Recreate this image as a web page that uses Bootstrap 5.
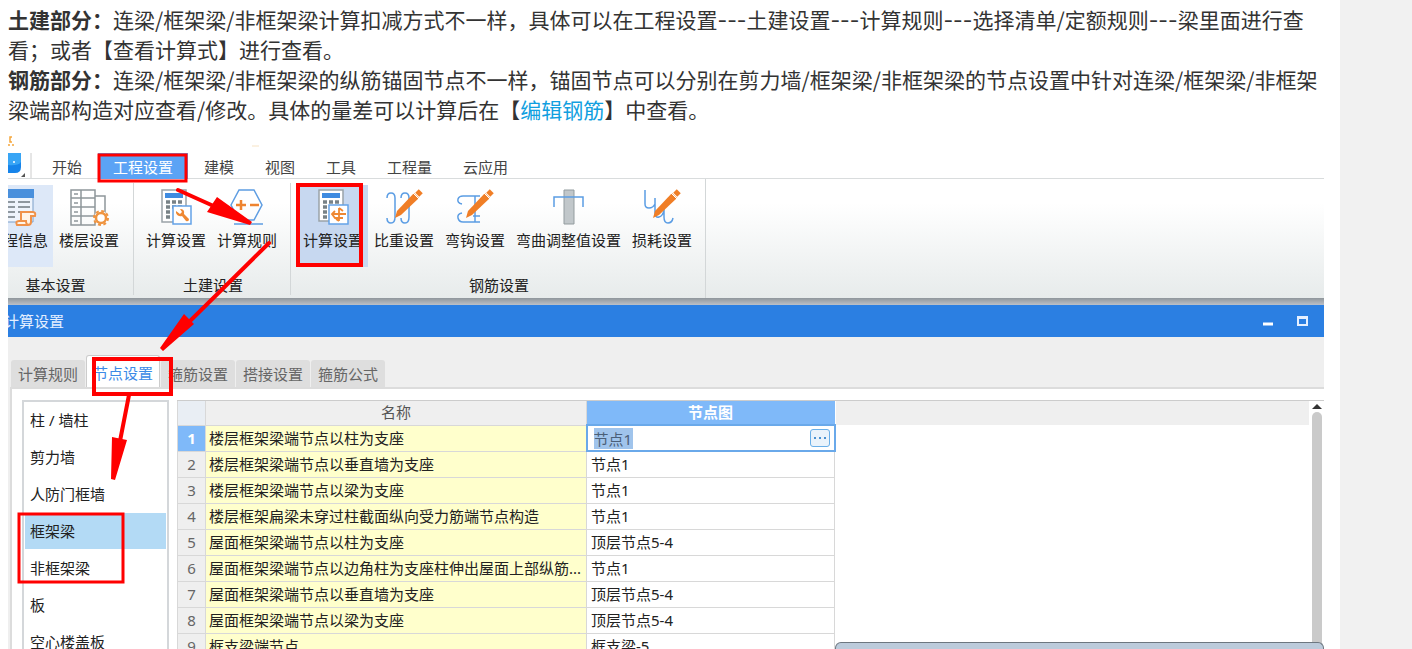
<!DOCTYPE html>
<html lang="zh-CN">
<head>
<meta charset="utf-8">
<meta name="viewport" content="width=device-width, initial-scale=1">
<title>计算设置说明</title>
<link href="https://cdn.jsdelivr.net/npm/bootstrap@5.3.0/dist/css/bootstrap.min.css" rel="stylesheet">
<style>
  body { background: #f1f1f1; font-family: "Noto Sans CJK SC", sans-serif; color: #333; }
  .page-main { background: #fff; margin-right: 72px; padding: 4px 16px 0 8px; }
  .answer { font-size: 21px; line-height: 30px; margin-bottom: 7px; }
  .answer a { color: #109fe0; text-decoration: none; }
  .dashes { font-family: Inter, sans-serif; line-height: 1; }
  .shot { font: 15px/20px "Noto Sans", "Noto Sans CJK SC", sans-serif; color: #333; min-height: 0; }
  .shot button { font: inherit; color: inherit; border: 0; background: none; padding: 0; white-space: nowrap; }
  .remnant { height: 22px; }
  .menu-row { height: 26px; gap: 1px; border-bottom: 1px solid #d9dcdd; color: #444; }
  .app-mark { width: 28px; height: 25px; }
  .shot .menu-tab { padding: 2px 15px 4px; height: 29px; }
  .shot .menu-tab.chosen { background: #5ba3f5; color: #fff; }
  .ribbon { height: 119px; background: linear-gradient(#fff 20%, #e7ebeb); color: #222; }
  .tool-group { padding: 6px 5px 3px; }
  .tool-group + .tool-group::before { content: ""; position: absolute; left: 0; top: 4px; bottom: 3px; width: 1px; background: #d3d7d8; }
  .first-group { margin-left: -25px; width: 150px; padding-left: 0; }
  .second-group { width: 157px; padding-left: 8px; }
  .third-group { width: 416px; padding-left: 8px; border-right: 1px solid #d3d7d8; }
  .tools { gap: 1px; }
  .shot .tool { height: 82px; padding: 4px 5px 0; display: flex; flex-direction: column; align-items: center; }
  .tool svg { width: 40px; height: 37px; margin-bottom: 4px; }
  .hovered { background: #dde8f8 !important; }
  .pressed { background: #c7d8f0 !important; }
  .band { height: 7px; background: linear-gradient(#8f969b, #bcc0c8); }
  .title-row { height: 32px; background: #2b7fe2; color: #e4efff; padding-right: 16px; gap: 22px; }
  .title-text { margin-left: -4px; }
  .dialog { background: #efefef; min-height: 0; }
  .dialog-tabs { padding: 18px 0 0 3px; gap: 1px; color: #666; height: 50px; }
  .shot .dialog-tab { padding: 0 7px; width: 74px; height: 27px; background: #dedede; border-radius: 3px 3px 0 0; }
  .shot .dialog-tab.chosen { background: #fff; color: #3c8ae6; height: 32px; border: 1px solid #ccc; border-bottom: 0; padding: 3px 6px 0; }
  .pane { background: #fff; border-top: 2px solid #dcdcdc; border-left: 2px solid #dcdcdc; margin-left: 2px; padding: 11px 0 0 10px; min-height: 0; }
  .kinds { width: 147px; border: 2px solid #d4d7da; border-bottom: 0; padding: 0 1px; flex: none; margin-right: 8px; color: #222; }
  .shot .kind { height: 37px; padding: 0 5px 2px; text-align: left; display: block; width: 100%; }
  .shot .kind.chosen { background: linear-gradient(#b3daf5, #b3daf5) top / 100% 36px no-repeat; }
  .sheet { border-top: 1px solid #ccc; min-width: 0; }
  .grid { table-layout: fixed; width: 657px; border-collapse: collapse; flex: none; color: #222; }
  .grid th, .grid td { height: 26px; padding: 0 4px 1px; border: 1px solid #d8d8d8; overflow: hidden; text-overflow: ellipsis; white-space: nowrap; font-weight: 400; }
  .grid thead th { background: #efefef; text-align: center; height: 24px; color: #555; border-top: 0; }
  .grid thead th:first-child { background: #e9eef4; }
  .grid thead th:last-child { background: #7fb9f9; color: #fff; font-weight: 700; border-color: #7fb9f9; }
  .grid tbody th { background: #efefef; text-align: center; color: #666; }
  .grid tbody td:nth-child(2) { background: #ffc; padding-left: 3px; }
  .grid tbody tr:first-child th { background: #7fb9f9; color: #fff; font-weight: 700; }
  .grid td.editing { border: 2px solid #6aa9ea; background: #fff; padding-bottom: 0; }
  .cell-input { width: 39px; height: 21px; border: 0; padding: 0; background: #a0c4ec; color: #4b5f78; font: inherit; margin-left: 2px; }
  .shot .more { width: 20px; height: 18px; border: 1px solid #6aafe8; border-radius: 3px; background: #eaf3fb; display: flex; align-items: center; justify-content: center; }
  .head-fill { height: 24px; background: #efefef; }
  .scroller { width: 15px; padding: 2px 2px 0 3px; }
  .thumb { background: #cacaca; border-radius: 5px 5px 0 0; margin-top: 3px; }
  .marks { left: 0; top: 0; width: 400px; height: 470px; pointer-events: none; z-index: 3; }
  .next-window { left: 827px; right: 0; bottom: 0; height: 7px; background: #bccbdb; border: 1px solid #6d7780; border-bottom: 0; border-radius: 6px 6px 0 0; z-index: 2; }
</style>
</head>
<body>
<main class="page-main vh-100 d-flex flex-column overflow-hidden">
  <p class="answer"><strong>土建部分：</strong>连梁/框架梁/非框架梁计算扣减方式不一样，具体可以在工程设置<span class="dashes">---</span>土建设置<span class="dashes">---</span>计算规则<span class="dashes">---</span>选择清单/定额规则<span class="dashes">---</span>梁里面进行查<br>看；或者【查看计算式】进行查看。<br><strong>钢筋部分：</strong>连梁/框架梁/非框架梁的纵筋锚固节点不一样，锚固节点可以分别在剪力墙/框架梁/非框架梁的节点设置中针对连梁/框架梁/非框架梁端部构造对应查看/修改。具体的量差可以计算后在【<a href="#">编辑钢筋</a>】中查看。</p>

  <section class="shot position-relative flex-grow-1 d-flex flex-column overflow-hidden">
    <div class="remnant flex-shrink-0">
      <svg class="d-block" width="300" height="22"><path d="M4 6H2v5h2M0 14h2M4 14h2" fill="none" stroke="#f5a63c" stroke-width="1.5"/><path d="M244 15h7" stroke="#f7e3c4"/></svg>
    </div>
    <nav class="menu-row d-flex flex-shrink-0">
      <svg class="app-mark flex-shrink-0" viewBox="0 0 28 25"><path d="M0 0h13v14q0 6-6 6H0z" fill="#1684ea"/><path d="M0 0h13v9q-3 4-13 3z" fill="#38a5f5"/><circle cx="6" cy="9" r="1" fill="#fff"/><path d="M17 20v4h-4z" fill="#555"/><path d="M23 0v25" stroke="#ccc"/></svg>
      <button class="menu-tab">开始</button>
      <button class="menu-tab chosen">工程设置</button>
      <button class="menu-tab">建模</button>
      <button class="menu-tab">视图</button>
      <button class="menu-tab">工具</button>
      <button class="menu-tab">工程量</button>
      <button class="menu-tab">云应用</button>
    </nav>

    <div class="ribbon d-flex flex-shrink-0">
      <div class="tool-group first-group position-relative d-flex flex-column justify-content-between flex-shrink-0">
        <div class="tools d-flex">
          <button class="tool hovered"><svg viewBox="0 0 40 37"><path d="M4 1h31v32H4z" fill="#eef4fc" stroke="#7d9fc8"/><path d="M4 0h32v9H4z" fill="#4a90dc"/><path d="M8 13h9M20 13h12M8 18h9M20 18h12M8 23h9M20 23h6M8 28h9" stroke="#8f989f" stroke-width="2"/><path d="M23 33V23h12q3 0 2 4h-4v6q0 3-3 3H19q-2-4 2-4h7q0 4 3 4" fill="#fff4e8" stroke="#f0924a" stroke-width="2"/></svg>工程信息</button>
          <button class="tool"><svg viewBox="0 0 40 37"><path d="M2 1h24v35H2zM12 1v35M2 9h24M2 18h24M2 27h24M26 7h10v18M5 5h4M5 14h4M5 23h4M5 32h4" fill="none" stroke="#8e979b" stroke-width="1.5"/><circle cx="32" cy="29" r="7" fill="#fff" stroke="#ef9440" stroke-width="2" stroke-dasharray="3 2.5"/><circle cx="32" cy="29" r="5" fill="#fff" stroke="#ef9440" stroke-width="2.5"/></svg>楼层设置</button>
        </div>
        <div class="text-center">基本设置</div>
      </div>
      <div class="tool-group second-group position-relative d-flex flex-column justify-content-between flex-shrink-0">
        <div class="tools d-flex">
          <button class="tool"><svg viewBox="0 0 40 37"><path d="M6 1h24v32H6z" fill="#fff" stroke="#9aa3a8" stroke-width="1.5"/><path d="M9 4h18v5H9z" fill="#3f8be0"/><path d="M10 13h18M10 18h18M10 23h6M10 28h6" stroke="#788287" stroke-width="3.5" stroke-dasharray="4 2"/><path d="M17 17h18v18H17z" fill="#fff" stroke="#64a3e8" stroke-width="1.5"/><path d="M20 22v2q2 4 6 3l4 5q3 1 3-2l-5-5q1-5-4-5l2 3-2 2z" fill="#ef8832"/></svg>计算设置</button>
          <button class="tool"><svg viewBox="0 0 40 37"><path d="M4 16L12 1h15l8 15-8 15H12zM7 35h29" fill="none" stroke="#5e9de2" stroke-width="1.5"/><path d="M9 16h10M14 11v10M23 16h9" stroke="#ee8430" stroke-width="2.5"/></svg>计算规则</button>
        </div>
        <div class="text-center">土建设置</div>
      </div>
      <div class="tool-group third-group position-relative d-flex flex-column justify-content-between flex-shrink-0">
        <div class="tools d-flex">
          <button class="tool pressed"><svg viewBox="0 0 40 37"><path d="M6 1h24v31H6z" fill="#fff" stroke="#9aa3a8" stroke-width="1.5"/><path d="M9 4h18v5H9z" fill="#3f8be0"/><path d="M10 13h18M10 18h6M10 23h6M10 28h6" stroke="#788287" stroke-width="3.5" stroke-dasharray="4 2"/><path d="M16 16h19v19H16z" fill="#fff" stroke="#64a3e8" stroke-width="1.5"/><path d="M26 19v13M19 25h14M22 22l-3 3 3 4h8M26 19l4 3M26 32l-3-2" fill="none" stroke="#ef8832" stroke-width="1.8"/></svg>计算设置</button>
          <button class="tool"><svg viewBox="0 0 40 37"><path d="M3 9q0-5 4-5t4 5v19q0 6-4 6t-4-5M17 9q0-5 4-5t4 5v19q0 6-4 6t-4-5" fill="none" stroke="#5b9de4" stroke-width="1.5"/><path d="M30 4l5 5-18 17-6 3 2-7z" fill="#f07e26"/><path d="M33 2l4 4" stroke="#f07e26" stroke-width="5"/><path d="M29 4l6 6" stroke="#fff"/></svg>比重设置</button>
          <button class="tool"><svg viewBox="0 0 40 37"><path d="M7 15q-5-1-4-5 1-3 5-3h17M7 24q-5 1-4 5 1 4 5 4h17M20 7v26M18 27h7" fill="none" stroke="#5b9de4" stroke-width="1.5"/><path d="M30 4l5 5-18 17-6 3 2-7z" fill="#f07e26"/><path d="M33 2l4 4" stroke="#f07e26" stroke-width="5"/><path d="M29 4l6 6" stroke="#fff"/></svg>弯钩设置</button>
          <button class="tool"><svg viewBox="0 0 40 37"><path d="M15 1h10v34H15z" fill="#c1c7ca" stroke="#939c9f"/><path d="M5 18V8h29v10" fill="none" stroke="#5b9de4" stroke-width="1.5"/></svg>弯曲调整值设置</button>
          <button class="tool"><svg viewBox="0 0 40 37"><path d="M3 1v14q0 4 4 4t6-4V9M13 15v8q0 6 4 5t5-7M22 18v10q0 6 4 6t5-5" fill="none" stroke="#5b9de4" stroke-width="1.5"/><path d="M30 4l5 5-18 17-6 3 2-7z" fill="#f07e26"/><path d="M33 2l4 4" stroke="#f07e26" stroke-width="5"/><path d="M29 4l6 6" stroke="#fff"/></svg>损耗设置</button>
        </div>
        <div class="text-center">钢筋设置</div>
      </div>
    </div>

    <div class="band flex-shrink-0"></div>
    <div class="title-row d-flex align-items-center flex-shrink-0">
      <span class="title-text me-auto">计算设置</span>
      <button aria-label="最小化"><svg class="d-block" width="12" height="12"><path d="M1 9h10" stroke="#fff" stroke-width="3"/></svg></button>
      <button aria-label="最大化"><svg class="d-block" width="12" height="12"><path d="M2 2h9v8H2zM1 3h11" fill="none" stroke="#e4efff" stroke-width="2"/></svg></button>
    </div>

    <div class="dialog flex-grow-1 d-flex flex-column">
      <div class="dialog-tabs d-flex align-items-end flex-shrink-0">
        <button class="dialog-tab">计算规则</button>
        <button class="dialog-tab chosen">节点设置</button>
        <button class="dialog-tab">箍筋设置</button>
        <button class="dialog-tab">搭接设置</button>
        <button class="dialog-tab">箍筋公式</button>
      </div>
      <div class="pane flex-grow-1 d-flex overflow-hidden">
        <div class="kinds">
          <button class="kind">柱 / 墙柱</button>
          <button class="kind">剪力墙</button>
          <button class="kind">人防门框墙</button>
          <button class="kind chosen">框架梁</button>
          <button class="kind">非框架梁</button>
          <button class="kind">板</button>
          <button class="kind">空心楼盖板</button>
        </div>
        <div class="sheet flex-grow-1 d-flex">
          <div>
            <table class="grid">
              <colgroup><col style="width:28px"><col style="width:381px"><col style="width:248px"></colgroup>
              <thead><tr><th></th><th>名称</th><th>节点图</th></tr></thead>
              <tbody>
                <tr><th>1</th><td>楼层框架梁端节点以柱为支座</td><td class="editing"><div class="d-flex justify-content-between align-items-center"><input class="cell-input" aria-label="节点图" value="节点1"><button class="more" aria-label="更多"><svg width="14" height="4"><path d="M1 2h2M6 2h2M11 2h2" stroke="#4a90d0" stroke-width="2"/></svg></button></div></td></tr>
                <tr><th>2</th><td>楼层框架梁端节点以垂直墙为支座</td><td>节点1</td></tr>
                <tr><th>3</th><td>楼层框架梁端节点以梁为支座</td><td>节点1</td></tr>
                <tr><th>4</th><td>楼层框架扁梁未穿过柱截面纵向受力筋端节点构造</td><td>节点1</td></tr>
                <tr><th>5</th><td>屋面框架梁端节点以柱为支座</td><td>顶层节点5-4</td></tr>
                <tr><th>6</th><td>屋面框架梁端节点以边角柱为支座柱伸出屋面上部纵筋...</td><td>节点1</td></tr>
                <tr><th>7</th><td>屋面框架梁端节点以垂直墙为支座</td><td>顶层节点5-4</td></tr>
                <tr><th>8</th><td>屋面框架梁端节点以梁为支座</td><td>顶层节点5-4</td></tr>
                <tr><th>9</th><td>框支梁端节点</td><td>框支梁-5</td></tr>
              </tbody>
            </table>
          </div>
          <div class="head-fill flex-grow-1"></div>
          <div class="scroller d-flex flex-column">
            <svg class="flex-shrink-0" width="10" height="6"><path d="M0 6l5-5 5 5z" fill="#333"/></svg>
            <div class="thumb flex-grow-1"></div>
          </div>
        </div>
      </div>
    </div>

    <div class="next-window position-absolute"></div>
    <svg class="marks position-absolute" viewBox="8 132 400 470" aria-hidden="true">
      <g fill="none" stroke="#f00">
        <path d="M99 156h87v26H99zM19 515h104v68H19z" stroke-width="3"/>
        <path d="M298 186h63v80h-63zM94 360h77v35H94z" stroke-width="4"/>
        <path d="M178 191l40 18M269 244l-80 79M129 396l-9 46" stroke-width="4" stroke-linecap="round"/>
      </g>
      <path d="M217 198l35 25-2 3-43-13zM184 315l10 10-31 27-3-3zM112 438l15 3-12 40-4-1z" fill="#f00"/>
    </svg>
  </section>
</main>
</body>
</html>
